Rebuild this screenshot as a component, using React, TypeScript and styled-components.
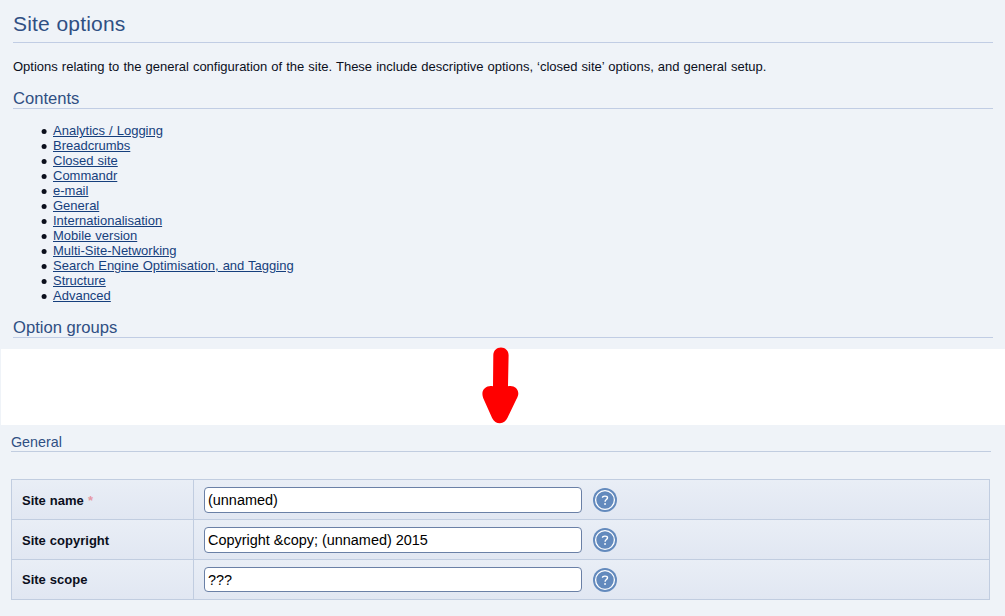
import React from "react";
import styled, { createGlobalStyle } from "styled-components";

const GlobalStyle = createGlobalStyle`
  body {
    margin: 0;
    background: #eff3f8;
    color: #0b0f1c;
    font: 13px/15px "Liberation Sans", Arial, sans-serif;
    word-spacing: 0.42px;
  }
`;

const Page = styled.main`
  width: 1005px;
  height: 616px;
  overflow: hidden;
`;

const Overview = styled.section`
  box-sizing: border-box;
  height: 349px;
  padding: 12px 12px 0 13px;
`;

const Title = styled.h1`
  box-sizing: border-box;
  height: 31px;
  margin: 0 0 16px;
  border-bottom: 1px solid #c1cde4;
  color: #2f4f83;
  font-size: 21px;
  font-weight: normal;
  line-height: 24px;
  letter-spacing: 0.2px;
`;

const Intro = styled.p`
  margin: 0 0 15px;
`;

const Heading = styled.h2`
  box-sizing: border-box;
  height: 20px;
  margin: 0;
  border-bottom: 1px solid #c1cde4;
  color: #2f4f83;
  font-size: 16.6px;
  font-weight: normal;
  line-height: 19px;
  word-spacing: 0;
`;

const Contents = styled.ul`
  margin: 14px 0 15px;
  padding-left: 28px;
  list-style: none;
`;

const ContentsItem = styled.li`
  display: flex;
  align-items: flex-start;
  gap: 6px;
`;

const Bullet = styled.svg`
  flex: none;
  width: 6px;
  height: 6px;
  margin-top: 5px;
  fill: #0b0f1c;
`;

const Link = styled.a`
  color: #163f7d;
  text-decoration: underline;
`;

const Gap = styled.div`
  display: flex;
  justify-content: center;
  height: 76px;
  margin-left: 1px;
  background: #fff;
`;

const Arrow = styled.svg`
  flex: none;
  width: 40px;
  height: 80px;
  margin: -3px 7px 0 0;
`;

const Settings = styled.section`
  padding: 8px 14px 0 11px;
`;

const GroupHeading = styled.h3`
  box-sizing: border-box;
  width: 980px;
  height: 19px;
  margin: 0 0 27px;
  border-bottom: 1px solid #c1cde0;
  color: #2f4f83;
  font-size: 14.3px;
  font-weight: normal;
  line-height: 18px;
`;

const Options = styled.div`
  box-sizing: border-box;
  width: 979px;
  border: 1px solid #c1cde0;
  border-bottom: 0;
`;

const Row = styled.div`
  box-sizing: border-box;
  display: flex;
  height: 40px;
  border-bottom: 1px solid #c1cde0;
  background: linear-gradient(#e9eef6, #e1e7f2);
`;

const Label = styled.label<{ $raised?: boolean }>`
  box-sizing: border-box;
  width: 182px;
  padding: ${(p) => (p.$raised ? 12 : 13)}px 10px 0;
  border-right: 1px solid #c1cde0;
  font-weight: bold;
`;

const Required = styled.span`
  color: #e699a5;
`;

const Field = styled.div`
  display: flex;
  align-items: flex-start;
  padding: 7px 0 0 10px;
`;

const Input = styled.input<{ $short?: boolean }>`
  box-sizing: border-box;
  width: 378px;
  height: ${(p) => (p.$short ? 25 : 26)}px;
  margin: 0 11px 0 0;
  padding: 0 3px;
  border: 1px solid #6a80a6;
  border-radius: 4px;
  background: #fff;
  color: #000;
  font: 14.45px "Liberation Sans", Arial, sans-serif;
  outline: none;
`;

const HelpIcon = styled.svg`
  width: 24px;
  height: 24px;
  margin-top: 1px;
`;

const Help = () => (
  <HelpIcon viewBox="0 0 24 24" aria-label="Help">
    <circle cx="12" cy="12" r="12" fill="#638abd" />
    <circle cx="12" cy="12" r="9.4" fill="none" stroke="#fff" strokeWidth="1.3" />
    <path d="M9.5 9.8V9.5C9.6 7.7 14.5 7.5 14.5 9.8c0 1.8-2.4 1.7-2.4 4" fill="none" stroke="#fff" strokeWidth="1.4" />
    <rect x="11.2" y="15.2" width="1.7" height="1.6" fill="#fff" />
  </HelpIcon>
);

const links = [
  "Analytics / Logging",
  "Breadcrumbs",
  "Closed site",
  "Commandr",
  "e-mail",
  "General",
  "Internationalisation",
  "Mobile version",
  "Multi-Site-Networking",
  "Search Engine Optimisation, and Tagging",
  "Structure",
  "Advanced",
];

const options = [
  { id: "name", label: "Site name", value: "(unnamed)", required: true },
  { id: "copyright", label: "Site copyright", value: "Copyright &copy; (unnamed) 2015" },
  { id: "scope", label: "Site scope", value: "???", compact: true },
];

export default function App() {
  return (
    <Page>
      <GlobalStyle />
      <Overview>
        <Title>Site options</Title>
        <Intro>
          Options relating to the general configuration of the site. These include descriptive options, ‘closed site’
          options, and general setup.
        </Intro>
        <Heading>Contents</Heading>
        <Contents>
          {links.map((name) => (
            <ContentsItem key={name}>
              <Bullet viewBox="0 0 6 6" aria-hidden="true">
                <circle cx="3.1" cy="3.4" r="2.5" />
              </Bullet>
              <Link href="#general">{name}</Link>
            </ContentsItem>
          ))}
        </Contents>
        <Heading>Option groups</Heading>
      </Overview>
      <Gap>
        <Arrow viewBox="0 0 40 80" aria-hidden="true">
          <path
            d="M21 1.5c4.3 0 7.6 3.2 7.6 7.7L28 40.3c5.5-1.3 10.4 2 10.3 7.3 0 2-.8 3.7-1.8 5.5L27.5 71.8c-1.6 3.6-4.2 5.4-7.5 5.4-3.5 0-6.2-1.8-7.9-5.3L3.6 53C2.9 51.2 2.4 49.6 2.4 47.5 2.4 42.4 7.6 38.9 13 40.2L13.3 9.3c0-4.5 3.3-7.8 7.7-7.8Z"
            fill="#f00"
          />
        </Arrow>
      </Gap>
      <Settings id="general">
        <GroupHeading>General</GroupHeading>
        <Options>
          {options.map((o) => (
            <Row key={o.id}>
              <Label htmlFor={o.id} $raised={o.compact}>
                {o.label}
                {o.required && <Required> *</Required>}
              </Label>
              <Field>
                <Input id={o.id} defaultValue={o.value} $short={o.compact} />
                <Help />
              </Field>
            </Row>
          ))}
        </Options>
      </Settings>
    </Page>
  );
}
